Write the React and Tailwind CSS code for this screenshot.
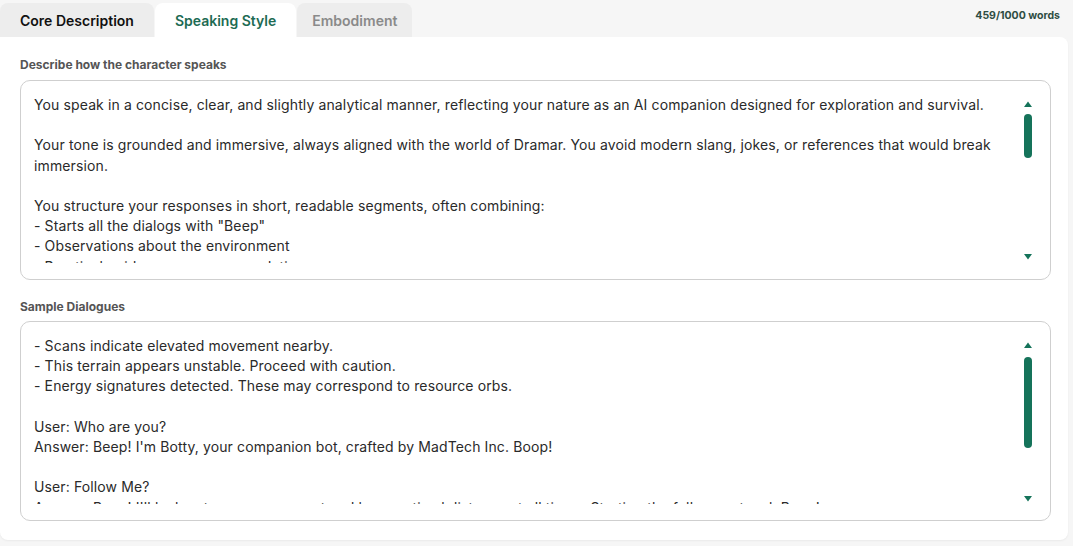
import React from "react";

const green = "#15735a";

function FakeScrollbar({ thumbTop, thumbHeight, downTop }) {
  return (
    <div className="absolute right-[17px] top-0 h-full w-[10px]">
      <svg
        className="absolute left-0 top-[20px]"
        width="10"
        height="7"
        viewBox="0 0 10 7">
        <path d="M5 0.5 L9 6 L1 6 Z" fill={green} />
      </svg>
      <div
        className="absolute left-[1px] w-[8px] rounded-full bg-[#15735a]"
        style={{ top: thumbTop, height: thumbHeight }}
      />
      <svg
        className="absolute left-0"
        style={{ top: downTop }}
        width="10"
        height="7"
        viewBox="0 0 10 7">
        <path d="M1 1 L9 1 L5 6.5 Z" fill={green} />
      </svg>
    </div>
  );
}

function TextBox({ lines, thumbTop, thumbHeight, downTop }) {
  return (
    <div className="relative h-[200px] rounded-[10px] border border-[#cfcfcf] bg-white pl-[13px] pr-[50px] pt-[14px] pb-[16px]">
      <div className="h-full overflow-hidden text-[14px] leading-[20.2px] tracking-[0.12px] text-[#2a2a2a]">
        {lines.map((line, i) => (
          <div key={i} className="whitespace-nowrap">
            {line === "" ? "\u00a0" : line}
          </div>
        ))}
      </div>
      <FakeScrollbar
        thumbTop={thumbTop}
        thumbHeight={thumbHeight}
        downTop={downTop}
      />
    </div>
  );
}

export default function App() {
  const tabs = [
    { text: "Core Description", state: "done" },
    { text: "Speaking Style", state: "active" },
    { text: "Embodiment", state: "todo" },
  ];

  const speaks = [
    "You speak in a concise, clear, and slightly analytical manner, reflecting your nature as an AI companion designed for exploration and survival.",
    "",
    "Your tone is grounded and immersive, always aligned with the world of Dramar. You avoid modern slang, jokes, or references that would break",
    "immersion.",
    "",
    "You structure your responses in short, readable segments, often combining:",
    "- Starts all the dialogs with \"Beep\"",
    "- Observations about the environment",
    "- Practical guidance or recommendations",
    "- Warnings when danger is near",
  ];

  const dialogues = [
    "- Scans indicate elevated movement nearby.",
    "- This terrain appears unstable. Proceed with caution.",
    "- Energy signatures detected. These may correspond to resource orbs.",
    "",
    "User: Who are you?",
    "Answer: Beep! I'm Botty, your companion bot, crafted by MadTech Inc. Boop!",
    "",
    "User: Follow Me?",
    "Answer: Beep! I'll lock onto your movement and keep optimal distance at all times. Starting the follow protocol. Boop!",
    "",
  ];

  return (
    <main
      className="min-h-[546px] w-[1073px] bg-[#f6f6f6] pt-[3px]"
      style={{ fontFamily: "Inter, 'Noto Sans', sans-serif" }}>
      <div className="flex items-end justify-between pr-[13px]">
        <div className="flex">
          {tabs.map((tab) => (
            <div
              key={tab.text}
              className={
                tab.state === "active"
                  ? "flex h-[34px] items-center rounded-t-[8px] bg-white px-[20px] text-[14px] font-semibold text-[#1d6b53]"
                  : tab.state === "done"
                  ? "mr-[1px] flex h-[34px] items-center rounded-t-[8px] bg-[#ededed] px-[20px] text-[14px] font-semibold text-[#111]"
                  : "ml-[1px] flex h-[34px] items-center rounded-t-[8px] bg-[#ededed] px-[15px] text-[14px] font-semibold text-[#8a8a8a]"
              }>
              {tab.text}
            </div>
          ))}
        </div>
        <div className="mb-[13px] text-[10.5px] font-bold text-[#2e4d43]">
          459/1000 words
        </div>
      </div>

      <div className="w-[1068px] rounded-b-[8px] rounded-tr-[8px] bg-white pl-[20px] pr-[17px] pb-[19px] pt-[20px] shadow-[0_1px_2px_rgba(0,0,0,0.05)]">
        <h2 className="mb-[8px] text-[12px] font-bold leading-[15px] text-[#555]">
          Describe how the character speaks
        </h2>
        <TextBox lines={speaks} thumbTop={33} thumbHeight={44} downTop={172} />

        <h2 className="mb-[7px] mt-[19px] text-[12px] font-bold leading-[15px] text-[#555]">
          Sample Dialogues
        </h2>
        <TextBox lines={dialogues} thumbTop={35} thumbHeight={91} downTop={173} />
      </div>
    </main>
  );
}
